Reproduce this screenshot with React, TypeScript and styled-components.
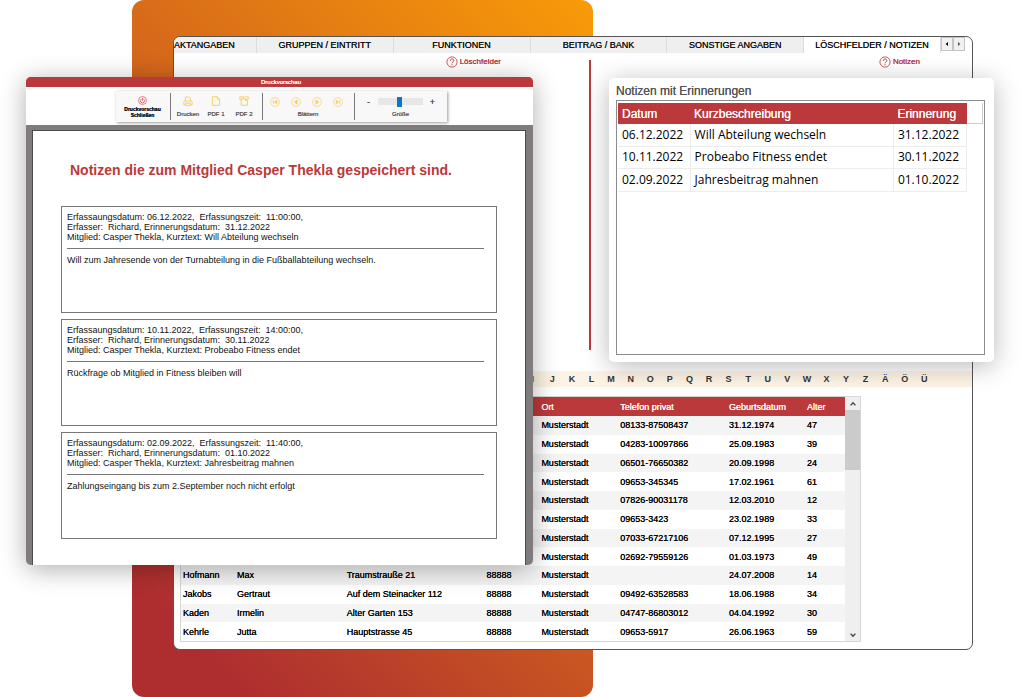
import React from "react";
import styled, { createGlobalStyle } from "styled-components";

const red = "#bb393b";
const gold = "#f5cd62";

const GlobalStyle = createGlobalStyle`
  * { box-sizing: border-box; }
  body {
    margin: 0;
    background: #fff;
    color: #111;
    font-family: "Liberation Sans", Arial, sans-serif;
  }
  button {
    font: inherit;
    color: inherit;
    margin: 0;
    padding: 0;
    border: 0;
    background: none;
    cursor: pointer;
  }
  h1, h2, p { margin: 0; }
  table { border-collapse: collapse; border-spacing: 0; }
  th, td { padding: 0; text-align: left; }
`;

/* The three windows share one grid row and overlap by column span. */
const Stage = styled.main`
  display: grid;
  grid-template-columns: 26px 106px 41px 360fr 60px 16px 364fr 21px 30px;
  min-height: 100vh;
  align-items: start;
`;

const Backdrop = styled.div`
  grid-row: 1;
  grid-column: 3 / 6;
  align-self: stretch;
  border-radius: 12px;
  background: linear-gradient(45deg, #ae2e30 10%, #d1621d 52%, #f99b08 100%);
`;

const MainWindow = styled.section`
  grid-row: 1;
  grid-column: 4 / 8;
  min-width: 0;
  margin: 36px 0 47px;
  border: 1px solid #555;
  border-radius: 7px;
  background: #fff;
  overflow: hidden;
`;

const TabBar = styled.nav`
  display: grid;
  grid-template-columns: 83fr repeat(5, 137fr) auto;
  height: 16px;
  padding-right: 7px;
`;

const Tab = styled.button<{ $active?: boolean; $first?: boolean }>`
  display: flex;
  align-items: center;
  justify-content: ${(p) => (p.$first ? "flex-start" : "center")};
  min-width: 0;
  border-right: 1px solid #dcdcdc;
  background: ${(p) => (p.$active ? "#fff" : "#efefef")};
  font-size: 9px;
  line-height: 14px;
  text-shadow: 0 0 0 currentColor;
  white-space: nowrap;
`;

const TabArrows = styled.div`
  display: flex;
  height: 14px;
`;

const ArrowButton = styled.button`
  display: grid;
  place-items: center;
  width: 12px;
  border: 1px solid #c4c4c4;
  background: #f1f1f1;
`;

const Panels = styled.div`
  display: grid;
  grid-template-columns: 417fr 381fr;
  height: 318px;
  padding: 7px 0 21px;
`;

const Panel = styled.div<{ $divided?: boolean; $inset: number }>`
  display: flex;
  justify-content: flex-end;
  align-items: flex-start;
  padding-right: ${(p) => p.$inset}px;
  border-right: ${(p) => (p.$divided ? `2px solid ${red}` : "0")};
`;

const HelpLink = styled.a`
  display: flex;
  align-items: center;
  gap: 2px;
  margin-top: -4px;
  color: ${red};
  font-size: 8px;
  line-height: 12px;
  text-decoration: none;
  text-shadow: 0 0 0 currentColor;
  svg { display: block; }
`;

const LetterBar = styled.nav`
  display: flex;
  height: 16px;
  padding: 0 38px 0 349px;
  background: #fdf3e4;
`;

const Letter = styled.button`
  flex: 1;
  min-width: 0;
  font-size: 9px;
  line-height: 16px;
  font-weight: 700;
  color: #333;
`;

const MemberList = styled.div`
  display: flex;
  margin: 9px 111px 7px 6px;
  border: 1px solid #d6d6d6;
`;

const MemberTable = styled.table`
  flex: 1;
  min-width: 0;
  height: 244px;
  table-layout: fixed;
  font-size: 9px;
  line-height: 12px;
  text-shadow: 0 0 0 currentColor;
  white-space: nowrap;
  color: #000;
  th {
    height: 19px;
    background: ${red};
    color: #fff;
    font-weight: 400;
  }
  th, td { padding-left: 2px; }
  tbody tr:nth-child(odd) { background: #f4f4f4; }
`;

const ScrollBar = styled.div`
  display: flex;
  flex-direction: column;
  width: 15px;
  background: #efefef;
`;

const ScrollButton = styled.button`
  display: grid;
  place-items: center;
  height: 13px;
`;

const ScrollThumb = styled.div`
  height: 60px;
  margin-bottom: auto;
  background: #cbcbcb;
`;

const PrintWindow = styled.section`
  grid-row: 1;
  grid-column: 2 / 5;
  min-width: 0;
  margin-top: 77px;
  border-radius: 5px;
  overflow: hidden;
  background: #807c7d;
  box-shadow: 0 4px 26px rgba(0, 0, 0, 0.32);
`;

const PrintTitle = styled.h1`
  padding-left: 3px;
  background: ${red};
  color: #fff;
  font-size: 6px;
  line-height: 10px;
  font-weight: 400;
  text-shadow: 0 0 0 currentColor;
  text-align: center;
`;

const ToolArea = styled.div`
  display: flex;
  justify-content: center;
  padding: 4px 0 3px 3px;
  background: #fff;
`;

const Toolbar = styled.div`
  display: flex;
  align-items: center;
  height: 31px;
  background: #f8f8f8;
  box-shadow: 1px 1px 3px rgba(0, 0, 0, 0.4);
`;

const ToolGroup = styled.div<{ $width: number }>`
  display: flex;
  flex-direction: column;
  align-items: stretch;
  justify-content: center;
  width: ${(p) => p.$width}px;
  height: 27px;
  & + & { border-left: 1px solid #777; }
`;

const ToolRow = styled.div<{ $shift?: boolean }>`
  display: flex;
  align-items: center;
  justify-content: center;
  padding-right: ${(p) => (p.$shift ? 4 : 0)}px;
`;

const ToolButton = styled.button<{ $width: number; $strong?: boolean }>`
  display: flex;
  flex-direction: column;
  align-items: center;
  gap: ${(p) => (p.$strong ? 1 : 5)}px;
  width: ${(p) => p.$width}px;
  font-size: ${(p) => (p.$strong ? 5 : 6)}px;
  line-height: 6px;
  font-weight: ${(p) => (p.$strong ? 700 : 400)};
  color: ${(p) => (p.$strong ? "#111" : "#555")};
  text-shadow: 0 0 0 currentColor;
  svg { display: block; }
`;

const GroupLabel = styled.label`
  margin-top: 4px;
  font-size: 6px;
  line-height: 6px;
  color: #555;
  text-shadow: 0 0 0 currentColor;
  text-align: center;
`;

const ZoomStep = styled.button`
  width: 9px;
  font-size: 9px;
  line-height: 10px;
  color: #555;
  text-shadow: 0 0 0 currentColor;
`;

const ZoomSlider = styled.input`
  appearance: none;
  width: 45px;
  height: 7px;
  margin: 0 5px;
  background: #e7e7e7;
  &::-webkit-slider-thumb {
    appearance: none;
    width: 5px;
    height: 10px;
    background: #0a74d1;
  }
`;

const Paper = styled.div`
  margin: 5px 7px 0 6px;
  padding: 31px 28px 26px 28px;
  border: 1px solid #4c4c4c;
  border-bottom: 0;
  background: #fff;
`;

const PaperTitle = styled.h2`
  padding-left: 9px;
  color: ${red};
  font-size: 14px;
  line-height: 16px;
  font-weight: 700;
  white-space: nowrap;
`;

const Notes = styled.div`
  display: grid;
  gap: 6px;
  margin-top: 28px;
`;

const Note = styled.article`
  height: 107px;
  padding: 5px 12px 0 5px;
  border: 1px solid #777;
  font-size: 9px;
  line-height: 10px;
  white-space: pre;
`;

const NoteHead = styled.p`
  padding-bottom: 6px;
  border-bottom: 1px solid #777;
`;

const NoteBody = styled.p`
  padding-top: 6px;
`;

const ReminderWindow = styled.section`
  grid-row: 1;
  grid-column: 7 / 9;
  min-width: 0;
  margin-top: 78px;
  padding: 5px 9px 7px 7px;
  border-radius: 5px;
  background: #fff;
  box-shadow: 0 4px 26px rgba(0, 0, 0, 0.28);
`;

const ReminderTitle = styled.h2`
  margin-bottom: 1px;
  font-size: 12px;
  line-height: 16px;
  font-weight: 400;
  color: #555;
  text-shadow: 0 0 0 currentColor;
`;

const ReminderBox = styled.div`
  display: flex;
  align-items: flex-start;
  height: 255px;
  padding: 2px 1px;
  border: 1px solid #8c8c8c;
`;

const ReminderTable = styled.table`
  flex: 1;
  height: 89px;
  table-layout: fixed;
  font-family: "Open Sans", "Noto Sans", sans-serif;
  font-size: 12px;
  line-height: 16px;
  color: #000;
  white-space: nowrap;
  th {
    height: 21px;
    background: ${red};
    color: #fff;
    font-family: "Liberation Sans", Arial, sans-serif;
    font-weight: 400;
    text-shadow: 0 0 0 currentColor;
  }
  th, td { padding-left: 4px; }
  td {
    border-right: 1px solid #ececec;
    border-bottom: 1px solid #ececec;
  }
`;

const HeaderFiller = styled.div`
  width: 16px;
  height: 21px;
  border-right: 1px solid #ccc;
  border-bottom: 1px solid #ccc;
`;

const tabs = [
  "AKTANGABEN",
  "GRUPPEN / EINTRITT",
  "FUNKTIONEN",
  "BEITRAG / BANK",
  "SONSTIGE ANGABEN",
  "LÖSCHFELDER / NOTIZEN",
];

const letters = "IJKLMNOPQRSTUVWXYZÄÖÜ".split("");

const columnWidths = [54, 110, 140, 55, 79, 109, 78, 40];

const members = [
  ["", "", "", "", "Musterstadt", "08133-87508437", "31.12.1974", "47"],
  ["", "", "", "", "Musterstadt", "04283-10097866", "25.09.1983", "39"],
  ["", "", "", "", "Musterstadt", "06501-76650382", "20.09.1998", "24"],
  ["", "", "", "", "Musterstadt", "09653-345345", "17.02.1961", "61"],
  ["", "", "", "", "Musterstadt", "07826-90031178", "12.03.2010", "12"],
  ["", "", "", "", "Musterstadt", "09653-3423", "23.02.1989", "33"],
  ["", "", "", "", "Musterstadt", "07033-67217106", "07.12.1995", "27"],
  ["", "", "", "", "Musterstadt", "02692-79559126", "01.03.1973", "49"],
  ["Hofmann", "Max", "Traumstrauße 21", "88888", "Musterstadt", "", "24.07.2008", "14"],
  ["Jakobs", "Gertraut", "Auf dem Steinacker 112", "88888", "Musterstadt", "09492-63528583", "18.06.1988", "34"],
  ["Kaden", "Irmelin", "Alter Garten 153", "88888", "Musterstadt", "04747-86803012", "04.04.1992", "30"],
  ["Kehrle", "Jutta", "Hauptstrasse 45", "88888", "Musterstadt", "09653-5917", "26.06.1963", "59"],
];

const notes = [
  {
    head: "Erfassaungsdatum: 06.12.2022,  Erfassungszeit:  11:00:00,\nErfasser:  Richard, Erinnerungsdatum:  31.12.2022\nMitglied: Casper Thekla, Kurztext: Will Abteilung wechseln",
    body: "Will zum Jahresende von der Turnabteilung in die Fußballabteilung wechseln.",
  },
  {
    head: "Erfassaungsdatum: 10.11.2022,  Erfassungszeit:  14:00:00,\nErfasser:  Richard, Erinnerungsdatum:  30.11.2022\nMitglied: Casper Thekla, Kurztext: Probeabo Fitness endet",
    body: "Rückfrage ob Mitglied in Fitness bleiben will",
  },
  {
    head: "Erfassaungsdatum: 02.09.2022,  Erfassungszeit:  11:40:00,\nErfasser:  Richard, Erinnerungsdatum:  01.10.2022\nMitglied: Casper Thekla, Kurztext: Jahresbeitrag mahnen",
    body: "Zahlungseingang bis zum 2.September noch nicht erfolgt",
  },
];

const reminders = [
  ["06.12.2022", "Will Abteilung wechseln", "31.12.2022"],
  ["10.11.2022", "Probeabo Fitness endet", "30.11.2022"],
  ["02.09.2022", "Jahresbeitrag mahnen", "01.10.2022"],
];

const HelpIcon = () => (
  <svg width="12" height="12" viewBox="0 0 12 12" fill="none" stroke={red} aria-hidden="true">
    <circle cx="6" cy="6" r="5.1" strokeWidth="0.8" />
    <path d="M4.3 4.8C4.3 2.4 7.8 2.4 7.8 4.6C7.8 5.9 6.1 5.8 6.1 7.3" strokeWidth="1" />
    <path d="M6.1 8.2V9.2" strokeWidth="1" />
  </svg>
);

const PowerIcon = () => (
  <svg width="9" height="9" viewBox="0 0 9 9" fill="none" stroke="#e0525c" aria-hidden="true">
    <circle cx="4.5" cy="4.5" r="4" strokeWidth="0.7" />
    <path d="M3.2 3.1A2.1 2.1 0 1 0 5.8 3.1M4.5 2V4.6" strokeWidth="0.9" />
  </svg>
);

const PrinterIcon = () => (
  <svg width="10" height="10" viewBox="0 0 10 10" fill="none" stroke={gold} aria-hidden="true">
    <path d="M2.4 5V1H5.8L7.4 2.6V5M2.4 8.8H0.7V6.4Q0.7 5 2 5H8Q9.3 5 9.3 6.4V8.8H7.6M2.4 7.2H7.6V9.4H2.4Z" strokeWidth="0.9" />
  </svg>
);

const FileIcon = () => (
  <svg width="10" height="10" viewBox="0 0 10 10" fill="none" stroke={gold} aria-hidden="true">
    <path d="M1.4 0.7H6.2L8.6 3.1V9.3H1.4ZM6.2 0.7V3.1H8.6" strokeWidth="0.9" />
  </svg>
);

const FilesIcon = () => (
  <svg width="10" height="10" viewBox="0 0 10 10" fill="none" stroke={gold} aria-hidden="true">
    <path d="M2.2 2.6H6.4L8.4 4.4V9.3H2.2ZM2.2 3.4H0.8V0.8H4.6L5.4 2.4M5.8 0.8H9.3V3.2H8M6.4 2.6V4.4H8.4" strokeWidth="0.9" />
  </svg>
);

const PagerIcon = ({ flip, end }: { flip?: boolean; end?: boolean }) => (
  <svg width="10" height="10" viewBox="0 0 10 10" fill="none" stroke={gold} aria-hidden="true">
    <circle cx="5" cy="5" r="4.4" strokeWidth="0.7" />
    <g transform={flip ? "matrix(-1 0 0 1 10 0)" : undefined}>
      <path d={end ? "M3 3L5.6 5L3 7Z" : "M3.8 2.8L6.8 5L3.8 7.2Z"} fill={gold} strokeWidth="0.5" />
      {end && <path d="M6.7 2.9V7.1" strokeWidth="0.8" />}
    </g>
  </svg>
);

const Chevron = ({ down }: { down?: boolean }) => (
  <svg width="8" height="6" viewBox="0 0 8 6" fill="none" stroke="#444" strokeWidth="1.4" aria-hidden="true">
    <path d={down ? "M1.6 1.6L4 4.2L6.4 1.6" : "M1.6 4.4L4 1.8L6.4 4.4"} />
  </svg>
);

const Triangle = ({ right }: { right?: boolean }) => (
  <svg width="4" height="6" viewBox="0 0 4 6" fill={right ? "#555" : "#000"} aria-hidden="true">
    <path d={right ? "M1 1L3.4 3L1 5Z" : "M3 1L0.6 3L3 5Z"} />
  </svg>
);

export default function App() {
  return (
    <>
      <GlobalStyle />
      <Stage>
        <Backdrop />

        <MainWindow>
          <TabBar>
            {tabs.map((name, i) => (
              <Tab key={name} $first={i === 0} $active={i === tabs.length - 1}>
                {name}
              </Tab>
            ))}
            <TabArrows>
              <ArrowButton aria-label="Zurück"><Triangle /></ArrowButton>
              <ArrowButton aria-label="Weiter"><Triangle right /></ArrowButton>
            </TabArrows>
          </TabBar>

          <Panels>
            <Panel $divided $inset={88}>
              <HelpLink href="#loeschfelder"><HelpIcon />Löschfelder</HelpLink>
            </Panel>
            <Panel $inset={52}>
              <HelpLink href="#notizen"><HelpIcon />Notizen</HelpLink>
            </Panel>
          </Panels>

          <LetterBar>
            {letters.map((l) => (
              <Letter key={l}>{l}</Letter>
            ))}
          </LetterBar>

          <MemberList>
            <MemberTable>
              <colgroup>
                {columnWidths.map((w, i) => (
                  <col key={i} width={w} />
                ))}
              </colgroup>
              <thead>
                <tr>
                  <th colSpan={4} />
                  <th>Ort</th>
                  <th>Telefon privat</th>
                  <th>Geburtsdatum</th>
                  <th>Alter</th>
                </tr>
              </thead>
              <tbody>
                {members.map((row) => (
                  <tr key={row[6]}>
                    {row.map((cell, i) => (
                      <td key={i}>{cell}</td>
                    ))}
                  </tr>
                ))}
              </tbody>
            </MemberTable>
            <ScrollBar>
              <ScrollButton aria-label="Nach oben"><Chevron /></ScrollButton>
              <ScrollThumb />
              <ScrollButton aria-label="Nach unten"><Chevron down /></ScrollButton>
            </ScrollBar>
          </MemberList>
        </MainWindow>

        <PrintWindow>
          <PrintTitle>Druckvorschau</PrintTitle>
          <ToolArea>
            <Toolbar>
              <ToolGroup $width={54}>
                <ToolButton $width={54} $strong>
                  <PowerIcon />
                  <span>Druckvorschau<br />Schließen</span>
                </ToolButton>
              </ToolGroup>
              <ToolGroup $width={92}>
                <ToolRow>
                  <ToolButton $width={28}><PrinterIcon />Drucken</ToolButton>
                  <ToolButton $width={28}><FileIcon />PDF 1</ToolButton>
                  <ToolButton $width={28}><FilesIcon />PDF 2</ToolButton>
                </ToolRow>
              </ToolGroup>
              <ToolGroup $width={92}>
                <ToolRow $shift>
                  <ToolButton $width={21} aria-label="Erste Seite"><PagerIcon flip end /></ToolButton>
                  <ToolButton $width={21} aria-label="Vorige Seite"><PagerIcon flip /></ToolButton>
                  <ToolButton $width={21} aria-label="Nächste Seite"><PagerIcon /></ToolButton>
                  <ToolButton $width={21} aria-label="Letzte Seite"><PagerIcon end /></ToolButton>
                </ToolRow>
                <GroupLabel as="span">Blättern</GroupLabel>
              </ToolGroup>
              <ToolGroup $width={93}>
                <ToolRow>
                  <ZoomStep>-</ZoomStep>
                  <ZoomSlider id="zoom" type="range" min="0" max="100" defaultValue="48" />
                  <ZoomStep>+</ZoomStep>
                </ToolRow>
                <GroupLabel htmlFor="zoom">Größe</GroupLabel>
              </ToolGroup>
            </Toolbar>
          </ToolArea>
          <Paper>
            <PaperTitle>Notizen die zum Mitglied Casper Thekla gespeichert sind.</PaperTitle>
            <Notes>
              {notes.map((n) => (
                <Note key={n.body}>
                  <NoteHead>{n.head}</NoteHead>
                  <NoteBody>{n.body}</NoteBody>
                </Note>
              ))}
            </Notes>
          </Paper>
        </PrintWindow>

        <ReminderWindow>
          <ReminderTitle>Notizen mit Erinnerungen</ReminderTitle>
          <ReminderBox>
            <ReminderTable>
              <colgroup>
                <col width={72} />
                <col width={203} />
                <col width={73} />
              </colgroup>
              <thead>
                <tr>
                  <th>Datum</th>
                  <th>Kurzbeschreibung</th>
                  <th>Erinnerung</th>
                </tr>
              </thead>
              <tbody>
                {reminders.map((row) => (
                  <tr key={row[0]}>
                    {row.map((cell, i) => (
                      <td key={i}>{cell}</td>
                    ))}
                  </tr>
                ))}
              </tbody>
            </ReminderTable>
            <HeaderFiller />
          </ReminderBox>
        </ReminderWindow>
      </Stage>
    </>
  );
}
